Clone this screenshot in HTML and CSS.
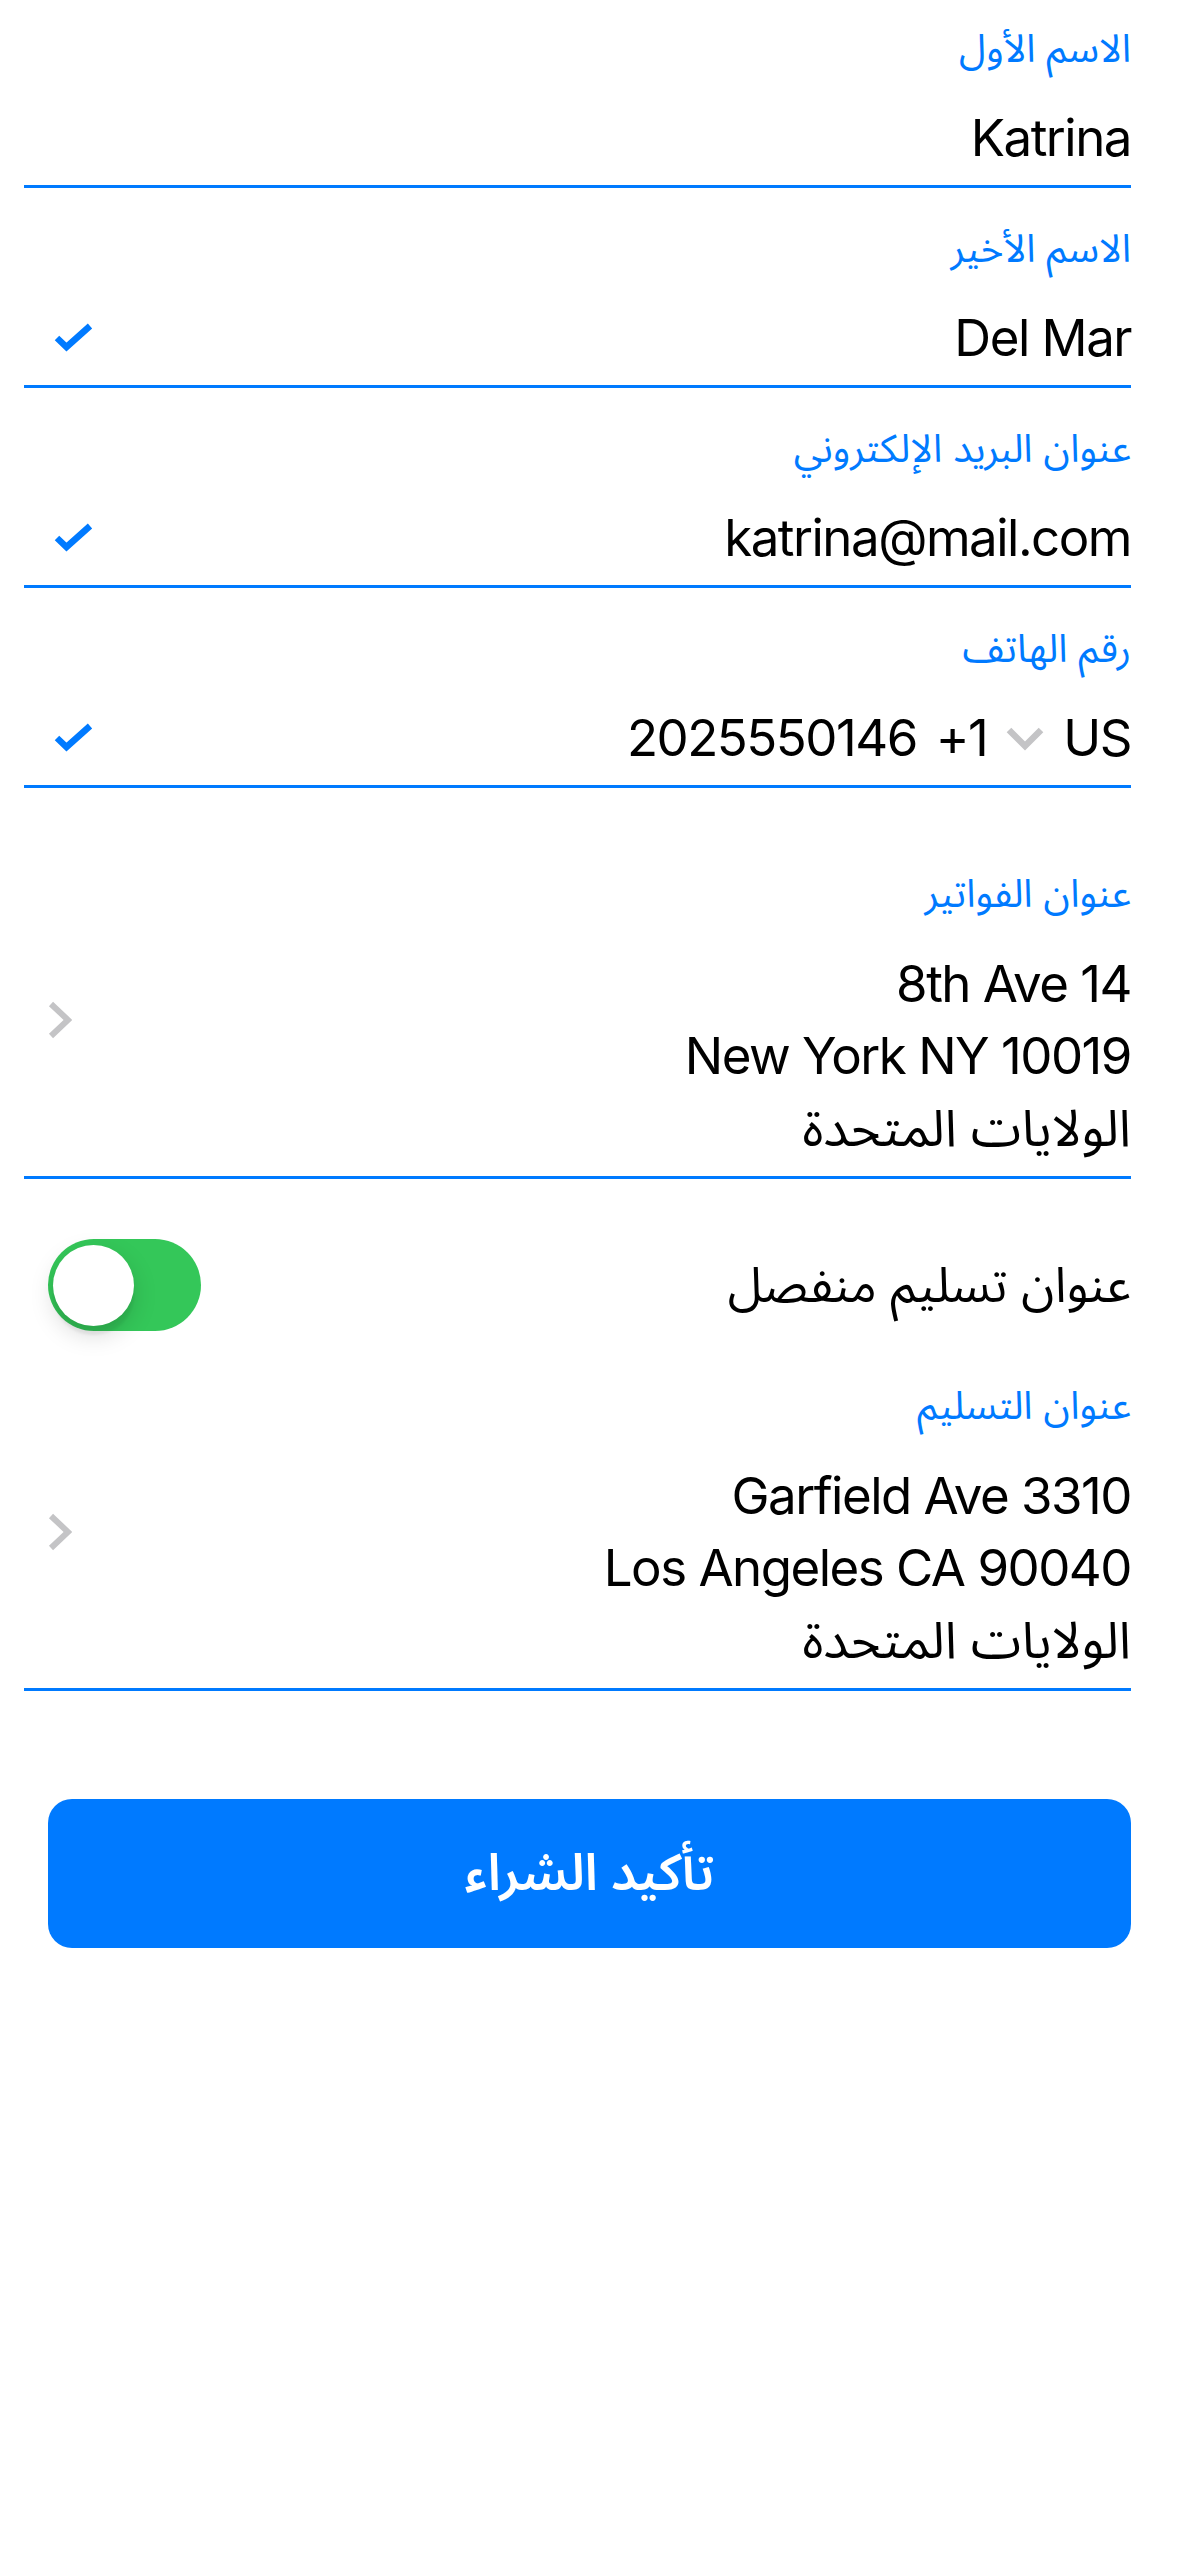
FILE: index.html
```html
<!DOCTYPE html>
<html lang="ar" dir="rtl">
<head>
<meta charset="utf-8">
<title>الدفع</title>
<link rel="stylesheet" href="styles.css">
</head>
<body>
<main class="form">
  <div class="field">
    <div class="label">الاسم الأول</div>
    <div class="value-row"><span class="value" dir="ltr">Katrina</span></div>
  </div>
  <div class="field">
    <div class="label">الاسم الأخير</div>
    <div class="value-row">
      <span class="value" dir="ltr">Del Mar</span>
      <svg class="check" width="40" height="30" viewBox="0 0 40 30"><polyline points="3,15 12.5,24 36,3" fill="none" stroke="#007aff" stroke-width="6.5"/></svg>
    </div>
  </div>
  <div class="field">
    <div class="label">عنوان البريد الإلكتروني</div>
    <div class="value-row">
      <span class="value" dir="ltr">katrina@mail.com</span>
      <svg class="check" width="40" height="30" viewBox="0 0 40 30"><polyline points="3,15 12.5,24 36,3" fill="none" stroke="#007aff" stroke-width="6.5"/></svg>
    </div>
  </div>
  <div class="field">
    <div class="label">رقم الهاتف</div>
    <div class="value-row">
      <span class="phone">
        <span class="value" dir="ltr">US</span>
        <svg class="chev-down" width="38" height="24" viewBox="0 0 38 24"><polyline points="3,3 19,19 35,3" fill="none" stroke="#c4c4c6" stroke-width="6.5"/></svg>
        <span class="value" dir="ltr">+1</span>
        <span class="value" dir="ltr">2025550146</span>
      </span>
      <svg class="check" width="40" height="30" viewBox="0 0 40 30"><polyline points="3,15 12.5,24 36,3" fill="none" stroke="#007aff" stroke-width="6.5"/></svg>
    </div>
  </div>

  <div class="field address billing">
    <div class="label">عنوان الفواتير</div>
    <div class="address-row">
      <div class="lines">
        <div class="line" dir="ltr">8th Ave 14</div>
        <div class="line" dir="ltr">New York NY 10019</div>
        <div class="line line-ar">الولايات المتحدة</div>
      </div>
      <svg class="chev-right" width="24" height="40" viewBox="0 0 24 40"><polyline points="3,4 20,20 3,36" fill="none" stroke="#c4c4c6" stroke-width="6"/></svg>
    </div>
  </div>

  <div class="toggle-row">
    <span class="toggle-label">عنوان تسليم منفصل</span>
    <span class="toggle"><span class="knob"></span></span>
  </div>

  <div class="field address delivery">
    <div class="label">عنوان التسليم</div>
    <div class="address-row">
      <div class="lines">
        <div class="line" dir="ltr">Garfield Ave 3310</div>
        <div class="line" dir="ltr">Los Angeles CA 90040</div>
        <div class="line line-ar">الولايات المتحدة</div>
      </div>
      <svg class="chev-right" width="24" height="40" viewBox="0 0 24 40"><polyline points="3,4 20,20 3,36" fill="none" stroke="#c4c4c6" stroke-width="6"/></svg>
    </div>
  </div>

  <button class="confirm" type="button">تأكيد الشراء</button>
</main>
</body>
</html>
```

FILE: styles.css
```css
* {
  box-sizing: border-box;
  margin: 0;
  padding: 0;
}

html, body {
  background: #ffffff;
}

body {
  width: 1179px;
  min-height: 2556px;
  font-family: "Inter", "Noto Sans Arabic", "DejaVu Sans", sans-serif;
  color: #000000;
}

.form {
  display: flex;
  flex-direction: column;
  padding: 0 48px 0 24px;
}

.field {
  border-bottom: 3px solid #007aff;
  padding-top: 23px;
}

.field + .field {
  margin-top: 12px;
}

.label {
  font-size: 39px;
  line-height: 50px;
  color: #007aff;
  text-align: right;
}

.value-row {
  margin-top: 35px;
  margin-bottom: 17px;
  height: 60px;
  display: flex;
  align-items: center;
  justify-content: space-between;
  padding-left: 30px;
}

.value {
  font-size: 51px;
  line-height: 60px;
  letter-spacing: -1.5px;
  white-space: nowrap;
}

.check {
  display: block;
  flex: none;
}

.phone {
  display: flex;
  align-items: center;
  gap: 19px;
}

.chev-down {
  display: block;
  margin-top: 2px;
}

.address {
  padding-top: 0;
}

.field.billing {
  margin-top: 80px;
}

.address-row {
  display: flex;
  align-items: flex-start;
  justify-content: space-between;
  margin-top: 30px;
  padding-bottom: 12px;
  padding-left: 24px;
}

.lines {
  display: flex;
  flex-direction: column;
}

.line {
  font-size: 51px;
  line-height: 72px;
  letter-spacing: -1.5px;
  text-align: right;
  white-space: nowrap;
}

.line-ar {
  letter-spacing: 0;
}

.chev-right {
  display: block;
  flex: none;
  margin-top: 52px;
}

.toggle-row {
  margin-top: 60px;
  height: 92px;
  display: flex;
  align-items: center;
  justify-content: space-between;
  padding-left: 24px;
}

.toggle-label {
  font-size: 49px;
  line-height: 60px;
}

.toggle {
  direction: ltr;
  display: flex;
  align-items: center;
  width: 153px;
  height: 92px;
  border-radius: 46px;
  background: #34c759;
  padding-left: 5px;
}

.knob {
  display: block;
  width: 81px;
  height: 81px;
  border-radius: 50%;
  background: #ffffff;
  box-shadow: 0 9px 24px rgba(0, 0, 0, 0.15), 0 9px 3px rgba(0, 0, 0, 0.06);
}

.field.delivery {
  margin-top: 49px;
}

.confirm {
  margin-top: 108px;
  margin-left: 24px;
  height: 149px;
  border: none;
  border-radius: 24px;
  background: #007aff;
  color: #ffffff;
  font-family: "Inter", "Noto Sans Arabic", "DejaVu Sans", sans-serif;
  font-size: 51px;
  font-weight: 600;
}
```
